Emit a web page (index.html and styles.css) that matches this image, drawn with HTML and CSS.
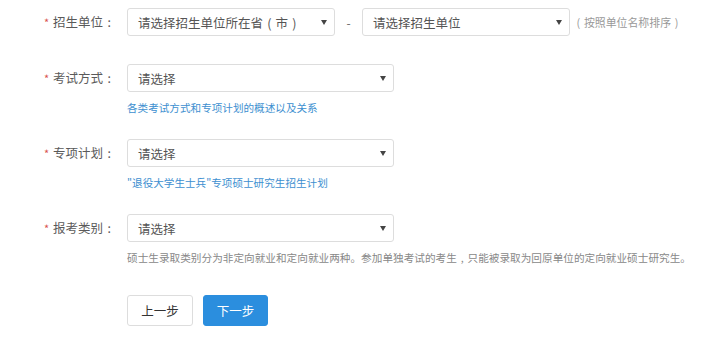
FILE: index.html
```html
<!DOCTYPE html>
<html lang="zh-CN">
<head>
<meta charset="utf-8">
<link rel="stylesheet" href="styles.css">
</head>
<body>
<div class="form">
  <div class="group g1">
    <div class="label"><span class="star">*</span>招生单位<span class="fw">:</span></div>
    <div class="controls">
      <div class="line">
        <div class="select w208"><span>请选择招生单位所在省<span class="fw">(</span>市<span class="fw">)</span></span><i class="arrow"></i></div>
        <span class="dash">-</span>
        <div class="select w208"><span>请选择招生单位</span><i class="arrow"></i></div>
        <span class="hint"><span class="fw">(</span>按照单位名称排序<span class="fw">)</span></span>
      </div>
    </div>
  </div>
  <div class="group">
    <div class="label"><span class="star">*</span>考试方式<span class="fw">:</span></div>
    <div class="controls">
      <div class="select w267"><span>请选择</span><i class="arrow"></i></div>
      <div class="help blue">各类考试方式和专项计划的概述以及关系</div>
    </div>
  </div>
  <div class="group">
    <div class="label"><span class="star">*</span>专项计划<span class="fw">:</span></div>
    <div class="controls">
      <div class="select w267"><span>请选择</span><i class="arrow"></i></div>
      <div class="help blue">"退役大学生士兵"专项硕士研究生招生计划</div>
    </div>
  </div>
  <div class="group">
    <div class="label"><span class="star">*</span>报考类别<span class="fw">:</span></div>
    <div class="controls">
      <div class="select w267"><span>请选择</span><i class="arrow"></i></div>
      <div class="help gray wide">硕士生录取类别分为非定向就业和定向就业两种<span class="fw fl">。</span>参加单独考试的考生<span class="fw">,</span>只能被录取为回原单位的定向就业硕士研究生<span class="fw fl">。</span></div>
    </div>
  </div>
  <div class="buttons">
    <button class="btn prev">上一步</button>
    <button class="btn next">下一步</button>
  </div>
</div>
</body>
</html>
```

FILE: styles.css
```css
html, body {
  margin: 0;
  padding: 0;
  background: #ffffff;
}
body {
  font-family: "Noto Sans CJK SC", "Noto Sans", sans-serif;
  color: #555555;
}
.form {
  padding-top: 8px;
}
.group {
  display: flex;
  align-items: flex-start;
  margin-bottom: 24px;
}
.group.g1 {
  margin-bottom: 28px;
}
.label {
  width: 127px;
  box-sizing: border-box;
  padding-left: 44px;
  height: 28px;
  line-height: 28px;
  font-size: 12.5px;
  color: #5a5a5a;
  white-space: nowrap;
}
.fw {
  display: inline-block;
  width: 1em;
  text-align: center;
}
.fw.fl {
  text-align: left;
}
.star {
  color: #d9534f;
  font-size: 11px;
  margin-right: 3px;
  display: inline-block;
  width: 6px;
}
.controls {
  display: flex;
  flex-direction: column;
}
.line {
  display: flex;
  align-items: center;
}
.select {
  box-sizing: border-box;
  height: 28px;
  border: 1px solid #dddddd;
  border-radius: 3px;
  display: flex;
  align-items: center;
  justify-content: space-between;
  padding: 0 7px 0 10px;
  font-size: 12.5px;
  color: #555555;
  background: #fff;
  white-space: nowrap;
}
.w208 { width: 208px; }
.w267 { width: 267px; }
.arrow {
  display: block;
  width: 0;
  height: 0;
  border-left: 3px solid transparent;
  border-right: 3px solid transparent;
  border-top: 5px solid #444444;
}
.dash {
  width: 27px;
  text-align: center;
  font-size: 12px;
  color: #666666;
}
.hint {
  margin-left: 3px;
  font-size: 10.9px;
  color: #999999;
  white-space: nowrap;
}
.help {
  margin-top: 9px;
  line-height: 14px;
  font-size: 10.6px;
  white-space: nowrap;
}
.help.wide {
  font-size: 10.65px;
}
.help.blue { color: #3d8fd0; }
.help.gray { color: #888888; }
.buttons {
  display: flex;
  gap: 10px;
  padding-left: 127px;
  margin-top: 30px;
}
.btn {
  height: 31px;
  box-sizing: border-box;
  border-radius: 3px;
  font-family: "Noto Sans CJK SC", sans-serif;
  font-size: 12.5px;
  padding: 0;
  cursor: pointer;
}
.prev {
  width: 66px;
  border: 1px solid #dddddd;
  background: #ffffff;
  color: #333333;
}
.next {
  width: 65px;
  border: 1px solid #2b8ede;
  background: #2b8ede;
  color: #ffffff;
}
```
